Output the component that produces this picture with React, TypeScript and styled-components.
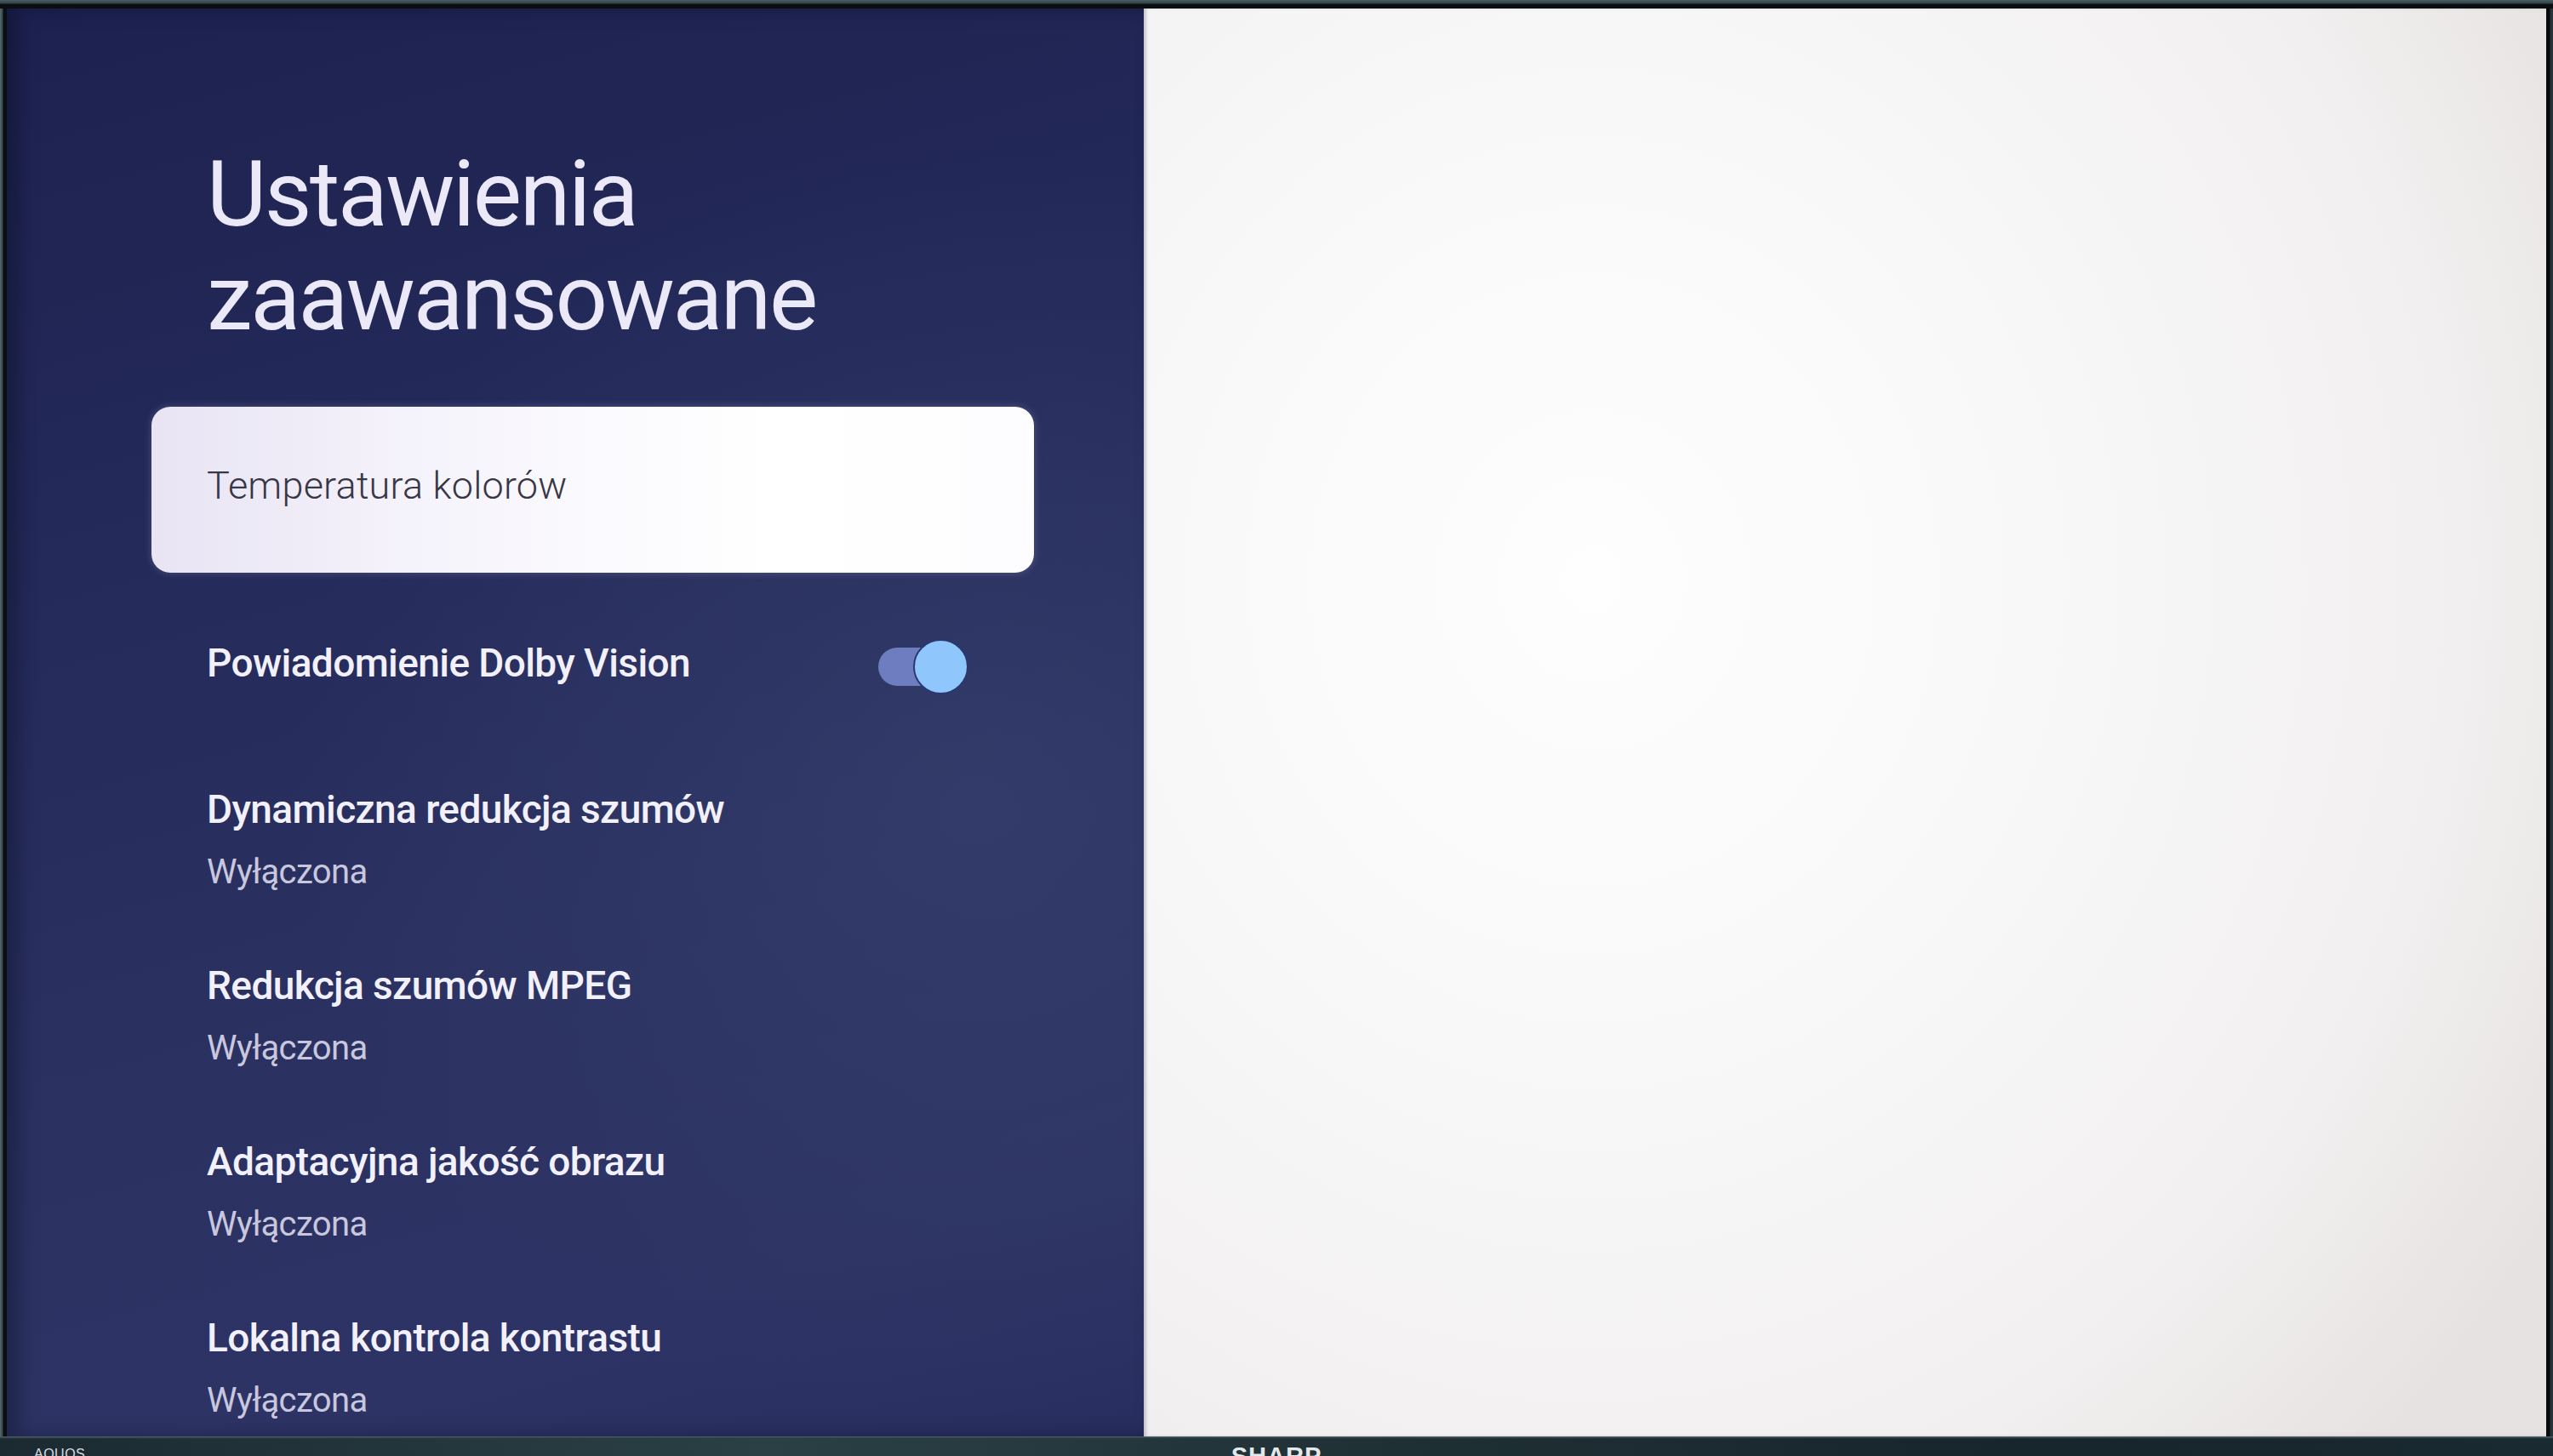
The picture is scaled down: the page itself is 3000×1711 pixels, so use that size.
import styled, { createGlobalStyle } from "styled-components"

const GlobalStyle = createGlobalStyle`
  html, body {
    margin: 0;
    padding: 0;
    background: #141d22;
  }
  body {
    font-family: Roboto, "Noto Sans", "Liberation Sans", sans-serif;
  }
`

const Frame = styled.div`
  width: 3000px;
  height: 1711px;
  display: flex;
  flex-direction: column;
  overflow: hidden;
  background: #17242a;
`

const TopBezel = styled.div`
  height: 10px;
  flex: none;
  background: linear-gradient(to bottom, #4b5e63 0px, #2f4147 4px, #0a0e11 5px, #0a0e11 10px);
`

const ScreenRow = styled.div`
  flex: 1;
  display: flex;
  min-height: 0;
`

const SideBezel = styled.div<{ $side: "left" | "right" }>`
  width: 8px;
  flex: none;
  background: ${(p) =>
    p.$side === "left"
      ? "linear-gradient(to right, #56676c 0px, #36474c 3px, #0a0e11 4px)"
      : "linear-gradient(to left, #24353b 0px, #24353b 3px, #07090b 4px)"};
`

const Screen = styled.div`
  flex: 1;
  display: flex;
  overflow: hidden;
`

const Panel = styled.div`
  width: 1336px;
  flex: none;
  display: flex;
  flex-direction: column;
  padding: 157px 129px 0 170px;
  box-sizing: border-box;
  overflow: hidden;
  background:
    radial-gradient(ellipse 60% 45% at 85% 55%, rgba(58, 68, 112, 0.5), rgba(58, 68, 112, 0) 100%),
    linear-gradient(165deg, #1d2150 0%, #232958 30%, #2a3161 60%, #2d3465 85%, #282e60 100%);
  box-shadow: inset 14px 0 22px rgba(5, 8, 25, 0.35);
`

const Heading = styled.h1`
  margin: 0 0 67px 0;
  padding-left: 65px;
  font-family: Roboto, "Noto Sans", sans-serif;
  font-weight: 400;
  font-size: 108px;
  line-height: 122px;
  letter-spacing: -2.4px;
  color: #ebe8f7;
`

const List = styled.div`
  display: flex;
  flex-direction: column;
`

const FocusCard = styled.div`
  height: 195px;
  display: flex;
  align-items: center;
  padding: 0 65px 10px 65px;
  box-sizing: border-box;
  border-radius: 22px;
  background: linear-gradient(90deg, #e8e4f4 0%, #f7f5fc 35%, #ffffff 70%, #fdfdff 100%);
  box-shadow: 0 0 10px rgba(200, 200, 240, 0.25);
`

const FocusLabel = styled.span`
  font-size: 45px;
  font-weight: 300;
  letter-spacing: 0.2px;
  color: #383746;
`

const ToggleRow = styled.div`
  height: 211px;
  display: flex;
  align-items: center;
  justify-content: space-between;
  padding: 0 77px 0 65px;
  box-sizing: border-box;
`

const Item = styled.div`
  display: flex;
  flex-direction: column;
  padding: 39px 65px 38px 65px;
`

const ItemTitle = styled.div`
  font-size: 46px;
  font-weight: 500;
  line-height: 56px;
  letter-spacing: -0.6px;
  color: #f2f0fa;
  white-space: nowrap;
`

const ItemValue = styled.div`
  margin-top: 18px;
  font-size: 40px;
  font-weight: 400;
  line-height: 56px;
  letter-spacing: -0.6px;
  color: #c9c7de;
`

const Switch = styled.div`
  position: relative;
  width: 106px;
  height: 65px;
  margin-top: 10px;
  flex: none;
`

const SwitchTrack = styled.div`
  position: absolute;
  left: 0;
  top: 10px;
  width: 92px;
  height: 45px;
  border-radius: 23px;
  background: #6e7dbf;
`

const SwitchThumb = styled.div`
  position: absolute;
  right: 0;
  top: 0;
  width: 65px;
  height: 65px;
  border-radius: 50%;
  box-sizing: border-box;
  border: 2px solid #2a3872;
  background: #8fc6fb;
`

const Preview = styled.div`
  flex: 1;
  background:
    radial-gradient(ellipse 80% 85% at 32% 40%, #fefefe 0%, #f8f7f7 45%, #f1efef 78%, #e6e2e1 100%);
  box-shadow: inset 3px 0 3px rgba(120, 120, 140, 0.35);
`

const BottomBezel = styled.div`
  height: 23px;
  flex: none;
  display: grid;
  grid-template-columns: 1fr auto 1fr;
  align-items: start;
  overflow: hidden;
  background:
    linear-gradient(to bottom, #59666a 0px, #2a3a40 2px, rgba(0, 0, 0, 0) 3px),
    linear-gradient(90deg, #1b2a31 0%, #2a4045 30%, #1f3035 55%, #17252c 80%, #1a2a31 100%);
`

const Brand = styled.span<{ $top: number }>`
  font-family: "Liberation Sans", Arial, sans-serif;
  padding-top: ${(p) => p.$top}px;
  line-height: 1;
  white-space: nowrap;
`

const AquosMark = styled(Brand)`
  justify-self: start;
  padding-left: 40px;
  font-size: 16px;
  letter-spacing: 0.5px;
  color: #d6dde0;
`

const SharpMark = styled(Brand)`
  font-size: 29px;
  font-weight: 700;
  letter-spacing: 1px;
  color: #e4e8ea;
`

const items = [
  { title: "Dynamiczna redukcja szumów", value: "Wyłączona" },
  { title: "Redukcja szumów MPEG", value: "Wyłączona" },
  { title: "Adaptacyjna jakość obrazu", value: "Wyłączona" },
  { title: "Lokalna kontrola kontrastu", value: "Wyłączona" },
]

export default function App() {
  return (
    <>
      <GlobalStyle />
      <Frame>
        <TopBezel />
        <ScreenRow>
          <SideBezel $side="left" />
          <Screen>
            <Panel>
              <Heading>
                Ustawienia
                <br />
                zaawansowane
              </Heading>
              <List>
                <FocusCard>
                  <FocusLabel>Temperatura kolorów</FocusLabel>
                </FocusCard>
                <ToggleRow>
                  <ItemTitle>Powiadomienie Dolby Vision</ItemTitle>
                  <Switch>
                    <SwitchTrack />
                    <SwitchThumb />
                  </Switch>
                </ToggleRow>
                {items.map((item) => (
                  <Item key={item.title}>
                    <ItemTitle>{item.title}</ItemTitle>
                    <ItemValue>{item.value}</ItemValue>
                  </Item>
                ))}
              </List>
            </Panel>
            <Preview />
          </Screen>
          <SideBezel $side="right" />
        </ScreenRow>
        <BottomBezel>
          <AquosMark $top={13}>AQUOS</AquosMark>
          <SharpMark $top={9}>SHARP</SharpMark>
          <span />
        </BottomBezel>
      </Frame>
    </>
  )
}
